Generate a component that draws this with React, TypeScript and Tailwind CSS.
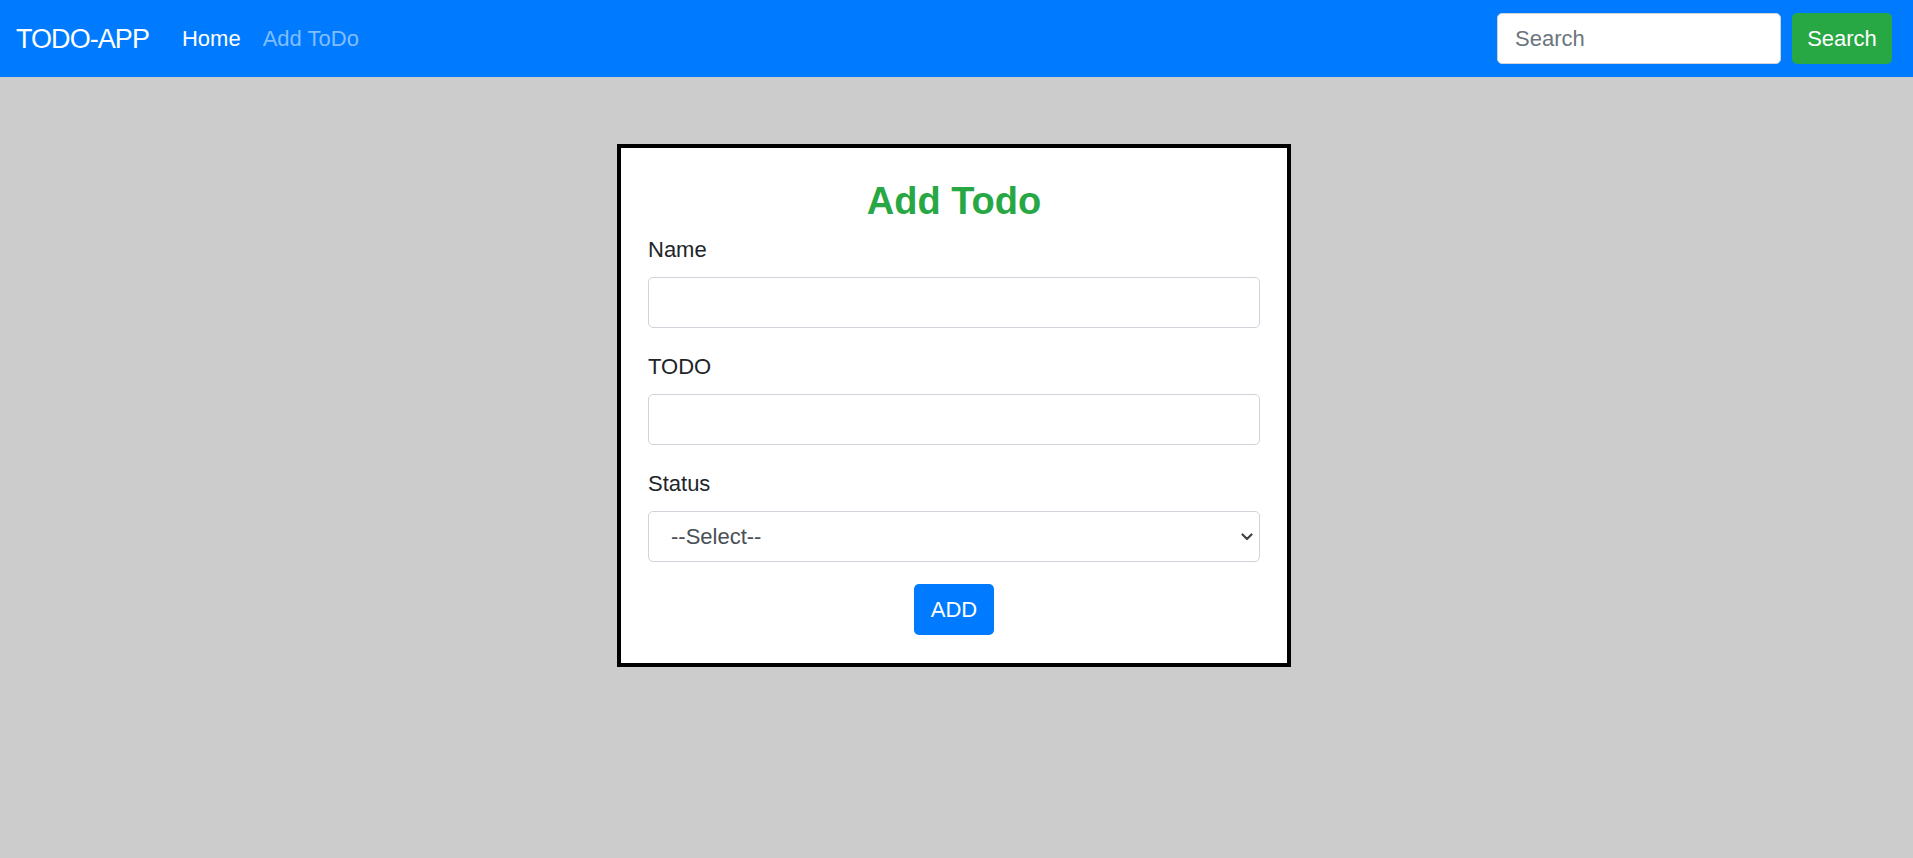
import { useState } from "react";

const font = { fontFamily: '"Liberation Sans", Arial, sans-serif' };

const Navbar = () => {
    return (
        <nav className="flex h-[77px] items-center bg-[#007bff] pl-[16px] pr-[21px]">
            <a href="#" className="mr-[22px] text-[27px] leading-[40px] tracking-[-0.035em] text-white">
                TODO-APP
            </a>
            <div className="flex items-center">
                <a href="#" className="px-[11px] text-[22px] leading-[33px] text-white">Home</a>
                <a href="#" className="px-[11px] text-[22px] leading-[33px] text-[#80bdff]">Add ToDo</a>
            </div>
            <form className="ml-auto flex items-center gap-[11px]" onSubmit={(e) => e.preventDefault()}>
                <input
                    type="search"
                    placeholder="Search"
                    className="h-[51px] w-[284px] rounded-[5px] border border-[#ced4da] bg-white pl-[17px] text-[22px] text-[#495057] outline-none placeholder:text-[#6c757d]"
                />
                <button className="h-[51px] w-[100px] rounded-[5px] bg-[#28a745] text-[22px] text-white">
                    Search
                </button>
            </form>
        </nav>
    );
};

interface FieldProps {
    label: string;
    children: React.ReactNode;
}

const Field = ({ label, children }: FieldProps) => (
    <div className="mb-[22px]">
        <label className="mb-[11px] block text-[22px] leading-[33px] text-[#212529]">{label}</label>
        {children}
    </div>
);

const inputCls =
    "block h-[51px] w-full rounded-[5px] border border-[#ced4da] bg-white px-[17px] text-[22px] text-[#495057] outline-none";

export default function App() {
    const [name, setName] = useState("");
    const [todo, setTodo] = useState("");
    const [status, setStatus] = useState("");

    return (
        <div className="min-h-screen bg-[#cccccc]" style={font}>
            <Navbar />
            <div className="flex justify-center pr-[5px] pt-[67px]">
                <div className="w-[674px] border-4 border-black bg-white px-[27px] pb-[28px] pt-[30px]">
                    <h3 className="mb-[9px] text-center text-[38px] font-bold leading-[46px] text-[#28a745]">
                        Add Todo
                    </h3>
                    <Field label="Name">
                        <input className={inputCls} value={name} onChange={(e) => setName(e.target.value)} />
                    </Field>
                    <Field label="TODO">
                        <input className={inputCls} value={todo} onChange={(e) => setTodo(e.target.value)} />
                    </Field>
                    <Field label="Status">
                        <div className="relative">
                            <select
                                className={inputCls + " appearance-none pl-[22px]"}
                                value={status}
                                onChange={(e) => setStatus(e.target.value)}
                            >
                                <option value="">--Select--</option>
                                <option value="pending">Pending</option>
                                <option value="done">Done</option>
                            </select>
                            <svg
                                className="pointer-events-none absolute right-[7px] top-1/2 -translate-y-1/2"
                                width="12"
                                height="8"
                                viewBox="0 0 12 8"
                                fill="none"
                            >
                                <path d="M1.5 1.5L6 6L10.5 1.5" stroke="#3d4349" strokeWidth="2.2" strokeLinecap="round" strokeLinejoin="round" />
                            </svg>
                        </div>
                    </Field>
                    <div className="flex justify-center">
                        <button className="h-[51px] w-[80px] rounded-[5px] bg-[#007bff] text-[22px] text-white">
                            ADD
                        </button>
                    </div>
                </div>
            </div>
        </div>
    );
}
